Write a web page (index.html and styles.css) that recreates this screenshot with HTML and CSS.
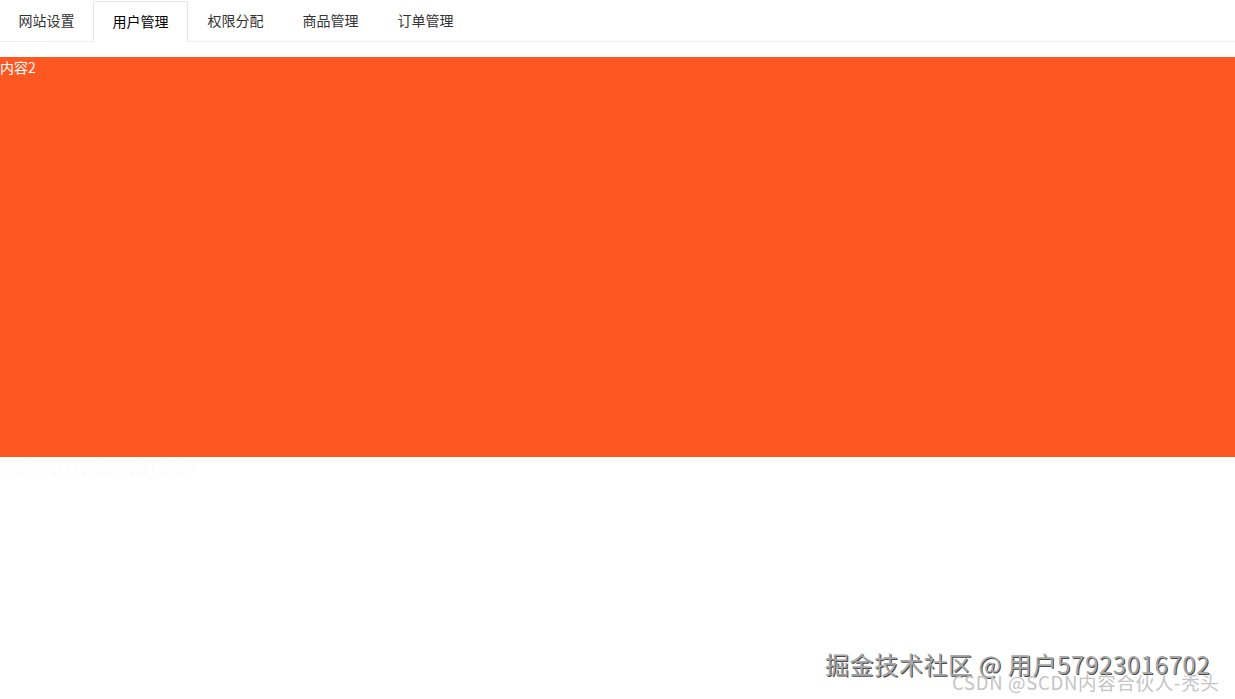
FILE: index.html
```html
<!DOCTYPE html>
<html lang="zh-CN">
<head>
<meta charset="utf-8">
<title>Tab</title>
<link rel="stylesheet" href="styles.css">
</head>
<body>
<div class="tab">
  <ul class="tab-title">
    <li class="tab-item first">网站设置</li>
    <li class="tab-item active">用户管理</li>
    <li class="tab-item">权限分配</li>
    <li class="tab-item">商品管理</li>
    <li class="tab-item">订单管理</li>
  </ul>
  <div class="tab-content">
    <div class="tab-panel">内容2</div>
    <div class="ghost">内容3 内容4 内容5 内容1 内容2</div>
  </div>
</div>
<div class="wm wm-juejin">掘金技术社区 @ 用户57923016702</div>
<div class="wm wm-csdn">CSDN @SCDN内容合伙人-秃头</div>
</body>
</html>
```
FILE: styles.css
```css
html, body {
  margin: 0;
  padding: 0;
  background: #fff;
  font-family: "Noto Sans CJK SC", "Liberation Sans", sans-serif;
  font-size: 14px;
}
.tab {
  padding-top: 1px;
}
.tab-title {
  list-style: none;
  margin: 0;
  padding: 0;
  display: flex;
  height: 40px;
  border-bottom: 1px solid #eeeeee;
}
.tab-item {
  box-sizing: border-box;
  width: 95px;
  height: 41px;
  line-height: 39px;
  text-align: center;
  color: #333;
  font-size: 14px;
}
.tab-item.first {
  width: 93px;
}
.tab-item.active {
  color: #000;
  border: 1px solid #e6e6e6;
  border-bottom-color: #fff;
  border-radius: 2px 2px 0 0;
  background: #fff;
  line-height: 38px;
}
.tab-content {
  padding-top: 15px;
}
.tab-panel {
  height: 400px;
  background: #ff5722;
  color: #fff;
  font-size: 14px;
  line-height: 20px;
}
.ghost {
  color: #fcfcfc;
  font-size: 14px;
  line-height: 20px;
  padding: 2px 4px;
}
.wm {
  position: absolute;
  white-space: nowrap;
}
.wm-juejin {
  left: 825px;
  top: 647px;
  font-size: 24px;
  line-height: 34px;
  letter-spacing: 0.6px;
  color: #a8a8a8;
  text-shadow: 1px 1px 0 #4a4a4a, -1px -1px 0 #ffffff;
}
.wm-csdn {
  left: 952px;
  top: 669px;
  font-size: 18.5px;
  line-height: 26px;
  letter-spacing: 0.7px;
  color: #c4c4c4;
}
```
